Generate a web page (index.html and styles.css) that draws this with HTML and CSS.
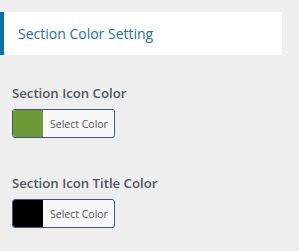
FILE: index.html
```html
<!DOCTYPE html>
<html lang="en">
<head>
    <meta charset="UTF-8">
    <title>Section Color Setting</title>
    <link rel="stylesheet" href="styles.css">
</head>
<body>
    <div class="panel">
        <h3 class="section-head">Section Color Setting</h3>

        <div class="control">
            <span class="control-title">Section Icon Color</span>
            <button class="color-btn" type="button">
                <span class="swatch green"></span>
                <span class="btn-text">Select Color</span>
            </button>
        </div>

        <div class="control">
            <span class="control-title">Section Icon Title Color</span>
            <button class="color-btn" type="button">
                <span class="swatch black"></span>
                <span class="btn-text">Select Color</span>
            </button>
        </div>
    </div>
</body>
</html>
```

FILE: styles.css
```css
body {
    margin: 0;
    background-color: #eeeeee;
    font-family: "Open Sans", "Noto Sans", sans-serif;
}
.panel {
    width: 299px;
    padding-top: 12px;
}
.section-head {
    box-sizing: border-box;
    width: 282px;
    height: 43px;
    margin: 0;
    padding-left: 14px;
    display: flex;
    align-items: center;
    background: #ffffff;
    border-left: 4px solid #0073aa;
    color: #23709d;
    font-size: 14px;
    font-weight: 500;
}
.section-head + .control {
    margin-top: 28px;
}
.control {
    padding: 0 12px;
}
.control + .control {
    margin-top: 35px;
}
.control-title {
    display: block;
    color: #50575e;
    font-size: 13.2px;
    font-weight: 600;
    line-height: 20px;
    margin-bottom: 6px;
}
.color-btn {
    display: flex;
    align-items: stretch;
    box-sizing: border-box;
    width: 103px;
    height: 29px;
    padding: 0;
    border: 1px solid #3b5a76;
    border-radius: 3px;
    background: #f7f7f7;
    overflow: hidden;
    font-family: inherit;
}
.swatch {
    width: 30px;
}
.green {
    background: #6f9a37;
}
.black {
    background: #000000;
}
.btn-text {
    display: flex;
    align-items: center;
    padding-left: 7px;
    color: #555555;
    font-size: 10.5px;
}
```
